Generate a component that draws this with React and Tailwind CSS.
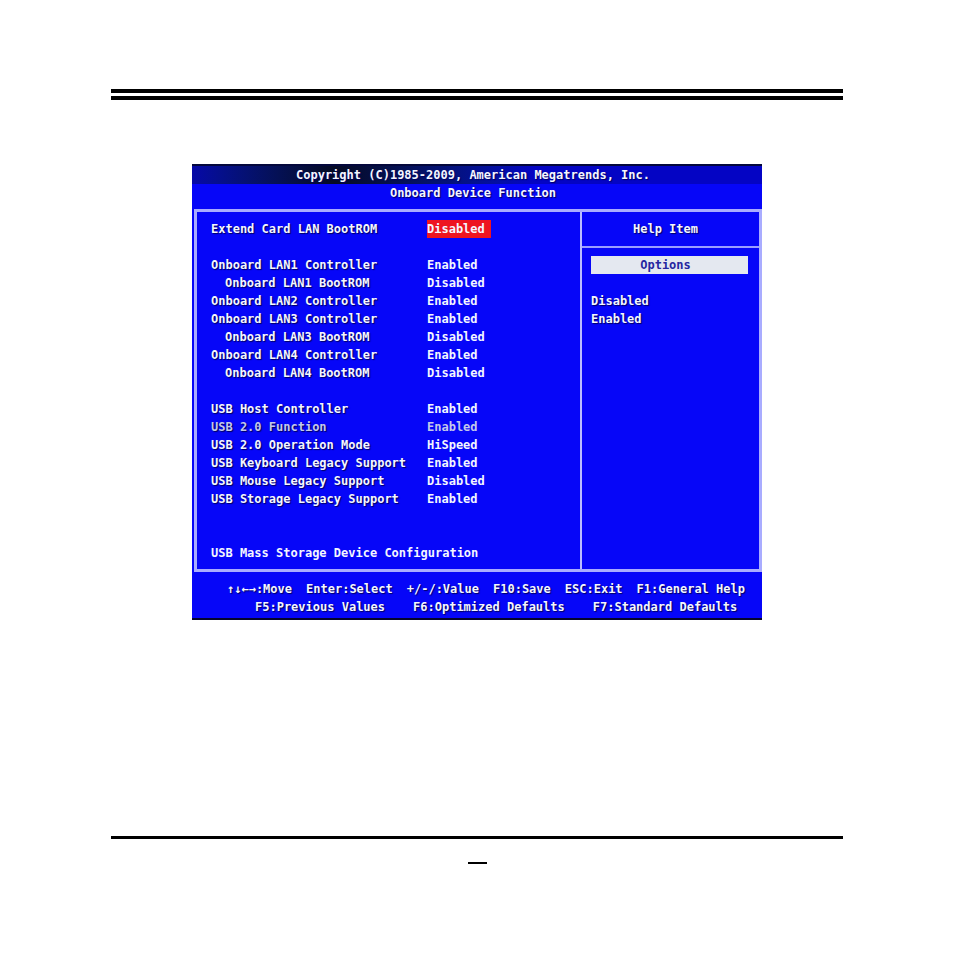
import React, { useState } from 'react'

const settings = [
  { label: 'Extend Card LAN BootROM', value: 'Disabled' },
  null,
  { label: 'Onboard LAN1 Controller', value: 'Enabled' },
  { label: 'Onboard LAN1 BootROM', value: 'Disabled', indent: true },
  { label: 'Onboard LAN2 Controller', value: 'Enabled' },
  { label: 'Onboard LAN3 Controller', value: 'Enabled' },
  { label: 'Onboard LAN3 BootROM', value: 'Disabled', indent: true },
  { label: 'Onboard LAN4 Controller', value: 'Enabled' },
  { label: 'Onboard LAN4 BootROM', value: 'Disabled', indent: true },
  null,
  { label: 'USB Host Controller', value: 'Enabled' },
  { label: 'USB 2.0 Function', value: 'Enabled', dim: true },
  { label: 'USB 2.0 Operation Mode', value: 'HiSpeed' },
  { label: 'USB Keyboard Legacy Support', value: 'Enabled' },
  { label: 'USB Mouse Legacy Support', value: 'Disabled' },
  { label: 'USB Storage Legacy Support', value: 'Enabled' }
]

const keys = ['↑↓←→:Move', 'Enter:Select', '+/-/:Value', 'F10:Save', 'ESC:Exit', 'F1:General Help']
const presets = ['F5:Previous Values', 'F6:Optimized Defaults', 'F7:Standard Defaults']

const SettingsTable = () => {
  const [active, setActive] = useState(0)

  return (
    <table className="w-full table-fixed text-left">
      <tbody>
        {settings.map((row, i) =>
          row ? (
            <tr key={i} className={`h-[18px] ${row.dim ? 'text-[#c4c8ea]' : ''}`}>
              <th scope="row" className={`w-[216px] p-0 font-bold ${row.indent ? 'pl-[14px]' : ''}`}>
                {row.label}
              </th>
              <td className="p-0">
                <button
                  onClick={() => setActive(i)}
                  aria-label={`${row.label}: ${row.value}`}
                  className={`block pr-[6px] ${active === i ? 'bg-[#ee1420]' : ''}`}
                >
                  {row.value}
                </button>
              </td>
            </tr>
          ) : (
            <tr key={i} className="h-[18px]">
              <td colSpan={2} className="p-0"></td>
            </tr>
          )
        )}
      </tbody>
    </table>
  )
}

const HelpPane = () => (
  <aside className="w-[179px] shrink-0 border-l-2 border-[#b9bcff]">
    <h2 className="border-b-2 border-[#9a9eff] py-2 pr-[10px] text-center">Help Item</h2>
    <div className="pt-2 pr-[11px] pl-[9px]">
      <h3 className="bg-[#e4e8f0] pr-2 text-center text-[#2626a0] [text-shadow:none]">Options</h3>
      <ul className="mt-[18px]">
        <li>Disabled</li>
        <li>Enabled</li>
      </ul>
    </div>
  </aside>
)

const BiosScreen = () => (
  <section className="mx-auto mt-16 w-full max-w-[570px] border-b-2 border-[#04042c] bg-[#0606f8] font-['DejaVu_Sans_Mono',monospace] text-[12px] leading-[18px] font-bold whitespace-nowrap text-[#f4f6ff] [text-shadow:1px_1px_1px_#000060]">
    <header className="pb-[7px] text-center">
      <p className="border-t-2 border-[#04083c] bg-linear-to-r from-[#0608a8] via-[#050a24] via-25% to-[#0404c4] to-60% pr-2">
        Copyright (C)1985-2009, American Megatrends, Inc.
      </p>
      <h1 className="pr-2">Onboard Device Function</h1>
    </header>

    <main className="ml-[2px] flex border-[3px] border-[#a9acff]">
      <div className="min-w-0 flex-1 pt-2 pb-[7px] pl-[14px]">
        <SettingsTable />
        <button className="mt-9 block">USB Mass Storage Device Configuration</button>
      </div>
      <HelpPane />
    </main>

    <footer className="pt-2 pb-[2px] pl-[35px]">
      <ul className="flex gap-[14px]">
        {keys.map((key) => (
          <li key={key}>{key}</li>
        ))}
      </ul>
      <ul className="flex gap-7 pl-7">
        {presets.map((preset) => (
          <li key={preset}>{preset}</li>
        ))}
      </ul>
    </footer>
  </section>
)

const App = () => {
  return (
    <div className="min-h-screen bg-white px-[111px] pt-[89px]">
      <div className="h-[11px] border-y-4 border-black"></div>
      <BiosScreen />
      <div className="mt-[216px] border-t-[3px] border-black"></div>
      <div className="mx-auto mt-[23px] w-[19px] border-t-2 border-black"></div>
    </div>
  )
}

export default App
